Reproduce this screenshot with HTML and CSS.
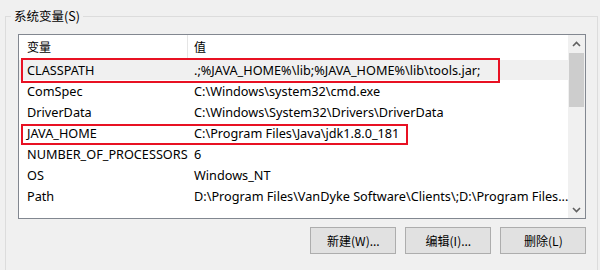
FILE: index.html
```html
<!DOCTYPE html>
<html>
<head>
<meta charset="utf-8">
<link rel="stylesheet" href="styles.css">
</head>
<body>
<fieldset class="group">
  <legend class="legend">系统变量(S)</legend>
  <div class="listbox">
    <div class="list">
      <div class="row head">
        <div class="c1">变量</div>
        <div class="c2">值</div>
      </div>
      <div class="row sel">
        <div class="c1">CLASSPATH</div>
        <div class="c2">.;%JAVA_HOME%\lib;%JAVA_HOME%\lib\tools.jar;</div>
        <div class="mark mark-cp"></div>
      </div>
      <div class="row">
        <div class="c1">ComSpec</div>
        <div class="c2">C:\Windows\system32\cmd.exe</div>
      </div>
      <div class="row">
        <div class="c1">DriverData</div>
        <div class="c2">C:\Windows\System32\Drivers\DriverData</div>
      </div>
      <div class="row">
        <div class="c1">JAVA_HOME</div>
        <div class="c2">C:\Program Files\Java\jdk1.8.0_181</div>
        <div class="mark mark-jh"></div>
      </div>
      <div class="row">
        <div class="c1">NUMBER_OF_PROCESSORS</div>
        <div class="c2">6</div>
      </div>
      <div class="row">
        <div class="c1">OS</div>
        <div class="c2">Windows_NT</div>
      </div>
      <div class="row">
        <div class="c1">Path</div>
        <div class="c2">D:\Program Files\VanDyke Software\Clients\;D:\Program Files...</div>
      </div>
    </div>
    <div class="scrollbar">
      <div class="arrow up"><svg width="9" height="6" viewBox="0 0 9 6"><path d="M1 5 L4.5 1.5 L8 5" fill="none" stroke="#606060" stroke-width="1.6"/></svg></div>
      <div class="thumb"></div>
      <div class="track"></div>
      <div class="arrow down"><svg width="9" height="6" viewBox="0 0 9 6"><path d="M1 1 L4.5 4.5 L8 1" fill="none" stroke="#606060" stroke-width="1.6"/></svg></div>
    </div>
  </div>
  <div class="buttons">
    <button class="btn">新建(W)...</button>
    <button class="btn">编辑(I)...</button>
    <button class="btn">删除(L)</button>
  </div>
</fieldset>
</body>
</html>
```

FILE: styles.css
```css
html, body {
  margin: 0;
  padding: 0;
  background: #f0f0f0;
  width: 600px;
  height: 270px;
  overflow: hidden;
  font-family: "Noto Sans", "Noto Sans CJK SC", sans-serif;
  font-size: 12.7px;
  color: #000;
}
.group {
  margin: 9px 3px 0 5px;
  padding: 0 11px 0 12px;
  border: 1px solid #dcdcdc;
  border-bottom: none;
  height: 261px;
  box-sizing: border-box;
}
.legend {
  margin-left: -7px;
  padding: 0 3px;
  font-family: "Noto Sans CJK SC", sans-serif;
  font-size: 12.5px;
  line-height: 14px;
}
.listbox {
  margin-top: 11px;
  height: 185px;
  border: 1px solid #828790;
  background: #fff;
  display: flex;
  box-sizing: border-box;
}
.list {
  flex: 1;
  position: relative;
}
.row {
  display: flex;
  height: 21px;
  align-items: center;
  position: relative;
  white-space: nowrap;
  box-sizing: border-box;
}
.row.head {
  height: 24px;
  align-items: stretch;
}
.row.head .c1 {
  border-right: 1px solid #e5e5e5;
  width: 169px;
}
.head .c1, .head .c2 {
  font-family: "Noto Sans CJK SC", sans-serif;
  font-size: 12px;
  line-height: 24px;
}
.row.sel {
  background: #f0f0f0;
  border-top: 1px solid #fff;
}
.c1 {
  width: 169px;
  padding-left: 8px;
  box-sizing: border-box;
}
.c2 {
  padding-left: 6px;
}
.mark {
  position: absolute;
  border: 2px solid #e81123;
  box-sizing: border-box;
  left: 2px;
}
.mark-cp {
  top: -2px;
  width: 479px;
  height: 25px;
}
.mark-jh {
  top: 2px;
  width: 387px;
  height: 21px;
}
.scrollbar {
  width: 17px;
  background: #f0f0f0;
  display: flex;
  flex-direction: column;
}
.arrow {
  height: 17px;
  display: flex;
  align-items: center;
  justify-content: center;
}
.thumb {
  margin: 1px 1px 0 1px;
  height: 54px;
  background: #cdcdcd;
}
.track {
  flex: 1;
}
.buttons {
  display: flex;
  justify-content: flex-end;
  gap: 9px;
  margin-top: 8px;
}
.btn {
  width: 86px;
  height: 27px;
  background: #e1e1e1;
  border: 1px solid #adadad;
  font-family: "Noto Sans CJK SC", sans-serif;
  font-size: 12px;
  color: #000;
  padding: 0;
}
```
